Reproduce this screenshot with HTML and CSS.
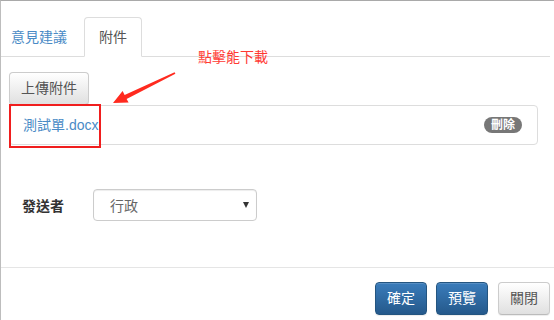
FILE: index.html
```html
<!DOCTYPE html>
<html lang="zh-Hant">
<head>
<meta charset="utf-8">
<link rel="stylesheet" href="styles.css">
</head>
<body>
<div class="dialog">
  <div class="body">
    <ul class="tabs">
      <li class="tab"><a href="#">意見建議</a></li>
      <li class="tab active"><a href="#">附件</a></li>
    </ul>
    <div class="pane">
      <button class="btn btn-default">上傳附件</button>
      <div class="list-item">
        <a class="file-link" href="#">測試單.docx</a>
        <span class="badge">刪除</span>
      </div>
      <div class="form-row">
        <label class="form-label">發送者</label>
        <div class="select">
          <span>行政</span>
          <span class="caret"></span>
        </div>
      </div>
    </div>
  </div>
  <div class="footer">
    <button class="btn btn-primary">確定</button>
    <button class="btn btn-primary">預覽</button>
    <button class="btn btn-default">關閉</button>
  </div>

  <div class="note">點擊能下載</div>
  <div class="note-box"></div>
  <svg class="note-arrow" width="554" height="320" viewBox="0 0 554 320">
    <polygon points="174.6,72.3 124.6,94.9 122.6,91.0 113,103 128.6,102.6 126.6,98.9 175.4,73.7" fill="#ff2a1f"/>
  </svg>
</div>
</body>
</html>
```
FILE: styles.css
```css
* { box-sizing: border-box; }
html, body { margin: 0; padding: 0; background: #fff; }
body {
  font-family: "Liberation Sans", "Noto Sans CJK TC", sans-serif;
  font-size: 14px;
  color: #333;
}
.dialog {
  position: relative;
  width: 554px;
  height: 320px;
  border-top: 1px solid #a9a9a9;
  border-left: 1px solid #bdbdbd;
  overflow: hidden;
}
.body {
  height: 266px;
  padding: 16px 4px 0 0;
}
.tabs {
  list-style: none;
  margin: 0;
  padding: 0;
  display: flex;
  border-bottom: 1px solid #ddd;
}
.tab {
  margin-right: 2px;
  margin-bottom: -1px;
}
.tab:first-child { margin-left: -5px; }
.tab a {
  display: block;
  padding: 9px 14px;
  line-height: 20px;
  border: 1px solid transparent;
  border-radius: 4px 4px 0 0;
  color: #4a8bc6;
  text-decoration: none;
}
.tab.active a {
  color: #555;
  background: #fff;
  border-color: #ddd #ddd transparent;
}
.pane {
  padding: 15px 12px 0 8px;
}
.btn {
  font-family: inherit;
  font-size: 14px;
  line-height: 19px;
  padding: 6px 11px;
  border: 1px solid;
  border-radius: 4px;
  cursor: pointer;
  display: inline-block;
  margin: 0;
}
.btn-default {
  color: #555;
  background: linear-gradient(#ffffff, #e0e0e0);
  border-color: #ccc #ccc #bbb;
  box-shadow: inset 0 1px 0 rgba(255,255,255,.15), 0 1px 1px rgba(0,0,0,.075);
}
.btn-primary {
  color: #fff;
  background: linear-gradient(#3a7cbb, #25598b);
  border-color: #245580;
  box-shadow: inset 0 1px 0 rgba(255,255,255,.15), 0 1px 1px rgba(0,0,0,.075);
}
.list-item {
  display: flex;
  justify-content: space-between;
  align-items: center;
  border: 1px solid #ddd;
  border-radius: 4px;
  padding: 9px 15px 9px 13px;
  line-height: 20px;
}
.file-link {
  color: #4a8bc6;
  text-decoration: none;
}
.badge {
  background: #777;
  color: #fff;
  font-size: 12px;
  font-weight: bold;
  line-height: 12px;
  padding: 2px 7px;
  border-radius: 9px;
}
.form-row {
  display: flex;
  align-items: center;
  margin-top: 44px;
  padding-left: 13px;
}
.form-label {
  width: 71px;
  font-weight: bold;
  color: #333;
}
.select {
  width: 164px;
  height: 32px;
  border: 1px solid #ccc;
  border-radius: 4px;
  display: flex;
  align-items: center;
  justify-content: space-between;
  padding: 0 7px 0 16px;
  color: #666;
  box-shadow: inset 0 1px 1px rgba(0,0,0,.075);
}
.caret {
  width: 0;
  height: 0;
  border-left: 3.5px solid transparent;
  border-right: 3.5px solid transparent;
  border-top: 6px solid #333;
}
.footer {
  border-top: 1px solid #e5e5e5;
  display: flex;
  justify-content: flex-end;
  gap: 9px;
  padding: 14px 4px 0 0;
}
.footer .btn:last-child { margin-left: 1px; }
.note {
  position: absolute;
  left: 197px;
  top: 48px;
  color: #ff3a33;
  font-size: 14px;
  line-height: 16px;
}
.note-box {
  position: absolute;
  left: 8px;
  top: 103px;
  width: 92px;
  height: 44px;
  border: 2px solid #f01e1e;
}
.note-arrow {
  position: absolute;
  left: -1px;
  top: -1px;
  pointer-events: none;
}
```
